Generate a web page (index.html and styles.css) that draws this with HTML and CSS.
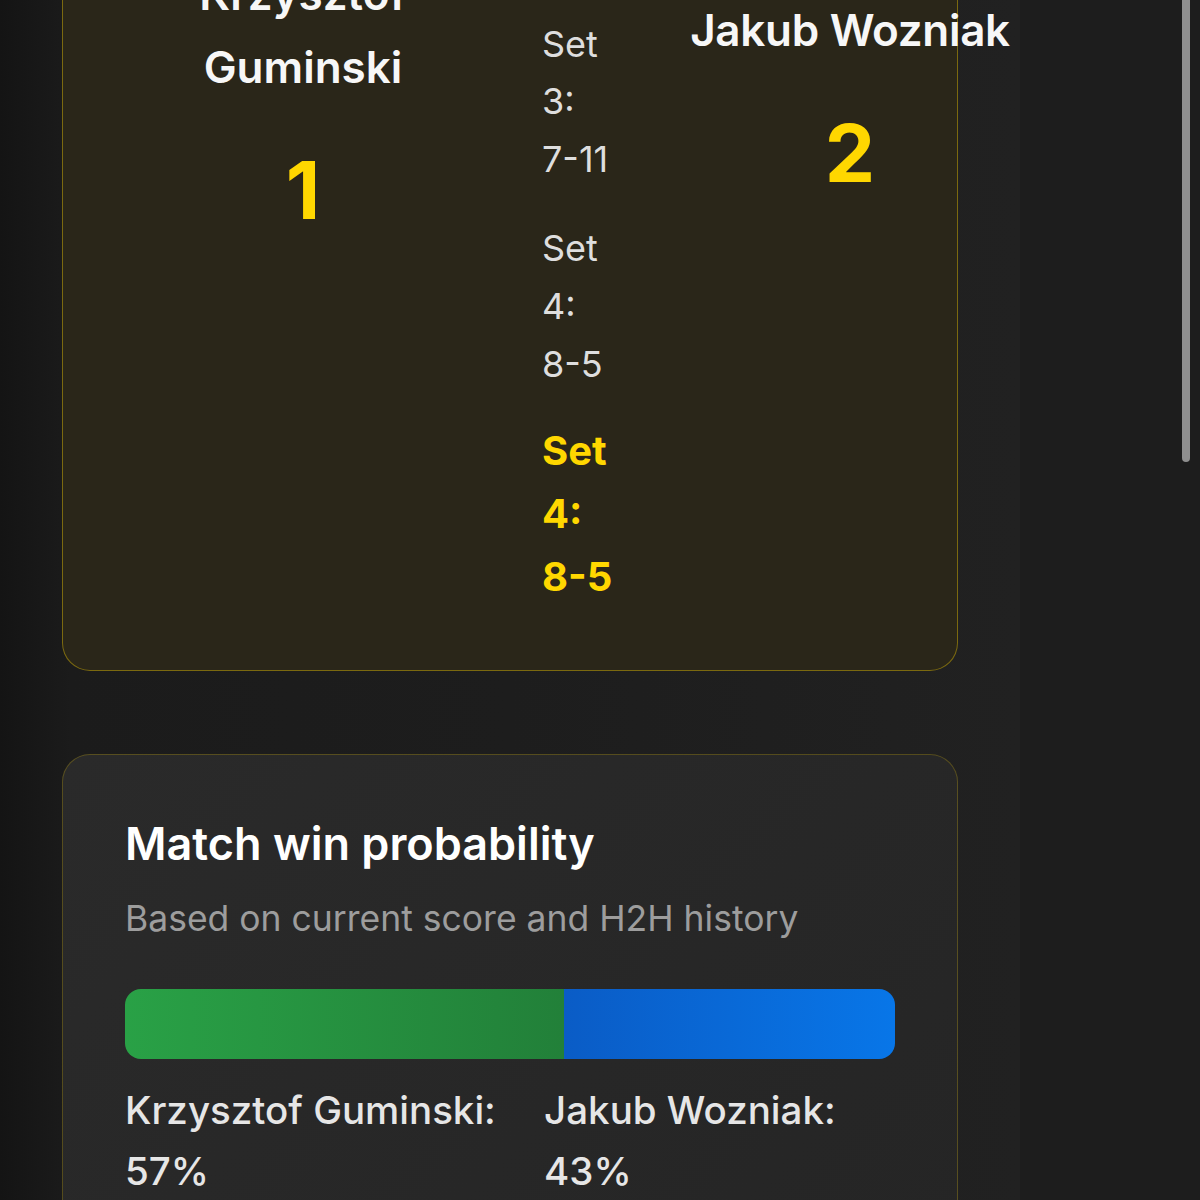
FILE: index.html
```html
<!DOCTYPE html>
<html>
<head>
  <meta charset="utf-8">
  <link rel="stylesheet" href="styles.css">
</head>
<body>
  <main class="page">
    <section class="card card-live">
      <div class="scoreboard">
        <div class="player">
          <div class="player-name">Krzysztof Guminski</div>
          <div class="player-sets">1</div>
        </div>

        <div class="sets">
          <div class="set">Set 1: <span class="set-score">11-9</span></div>
          <div class="set">Set 2: <span class="set-score">9-11</span></div>
          <div class="set">Set 3: <span class="set-score">7-11</span></div>
          <div class="set">Set 4: <span class="set-score">8-5</span></div>
          <div class="set set-current">Set 4: <span class="set-score">8-5</span></div>
        </div>

        <div class="player player-away">
          <div class="player-name">Jakub Wozniak</div>
          <div class="player-sets">2</div>
        </div>
      </div>
    </section>

    <section class="card">
      <h2 class="card-title">Match win probability</h2>
      <p class="card-subtitle">Based on current score and H2H history</p>
      <div class="prob-bar">
        <div class="prob-home" style="width: 57%"></div>
        <div class="prob-away" style="width: 43%"></div>
      </div>
      <div class="prob-labels">
        <span>Krzysztof Guminski: 57%</span>
        <span>Jakub Wozniak: 43%</span>
      </div>
    </section>
  </main>

  <div class="scroll-thumb"></div>
</body>
</html>
```

FILE: styles.css
```css
html, body {
  overflow: hidden;
}

body {
  margin: 0;
  padding: 0;
  background: #1d1d1d;
  color: #e8e8e8;
  font-family: Inter, "Noto Sans", "Liberation Sans", sans-serif;
  font-size: 36px;
  line-height: 1.6;
}

/* page is scrolled down a bit, the header sits above the fold */
.page {
  width: 1020px;
  box-sizing: border-box;
  padding: 0 62px 200px;
  margin-top: -457px;
  background: linear-gradient(90deg, #141414 0, #1b1b1b 70px, #1d1d1d 50%, #212121 100%);
}

.card {
  border-radius: 28px;
  padding: 62px;
  background: linear-gradient(135deg, #2a2a2a, #252525);
  border: 1px solid rgba(255, 215, 0, 0.22);
  margin-bottom: 83px;
}

.card-live {
  background: #2a2619;
  border-color: rgba(255, 215, 0, 0.38);
}

.scoreboard {
  display: grid;
  grid-template-columns: 356px 1fr 90px;
  column-gap: 61px;
  align-items: center;
}

.player {
  display: flex;
  flex-direction: column;
  align-items: center;
  text-align: center;
  padding-bottom: 3px;
}

.player-name {
  font-size: 44px;
  font-weight: 600;
  line-height: 73px;
  color: #f7f7f7;
  margin-bottom: 22px;
}

.player-away .player-name {
  white-space: nowrap;
  letter-spacing: -0.3px;
}

.player-sets {
  font-size: 80px;
  font-weight: 700;
  color: #ffd700;
}

.sets {
  display: flex;
  flex-direction: column;
}

.set {
  width: min-content;
  color: #dedede;
  margin-bottom: 32px;
}

.set-score {
  white-space: nowrap;
}

.set-current {
  margin: -6px 0 0;
  font-size: 40px;
  font-weight: 700;
  line-height: 63px;
  color: #ffd700;
}

.card-title {
  margin: 0;
  font-size: 45px;
  font-weight: 600;
  line-height: 1.2;
  color: #fff;
}

.card-subtitle {
  margin: 20px 0 41px;
  font-size: 35.5px;
  color: #9d9d9d;
}

.prob-bar {
  display: flex;
  height: 70px;
  border-radius: 16px;
  overflow: hidden;
}

.prob-home {
  background: linear-gradient(90deg, #29a146, #228039);
}

.prob-away {
  background: linear-gradient(90deg, #0a5cc6, #0876e8);
}

.prob-labels {
  display: flex;
  justify-content: space-between;
  margin-top: 21px;
  font-size: 38.5px;
  font-weight: 500;
  line-height: 61px;
  color: #e6e6e6;
}

.scroll-thumb {
  position: fixed;
  top: -20px;
  right: 10px;
  width: 8px;
  height: 482px;
  border-radius: 4px;
  background: #8f8f8f;
}
```
